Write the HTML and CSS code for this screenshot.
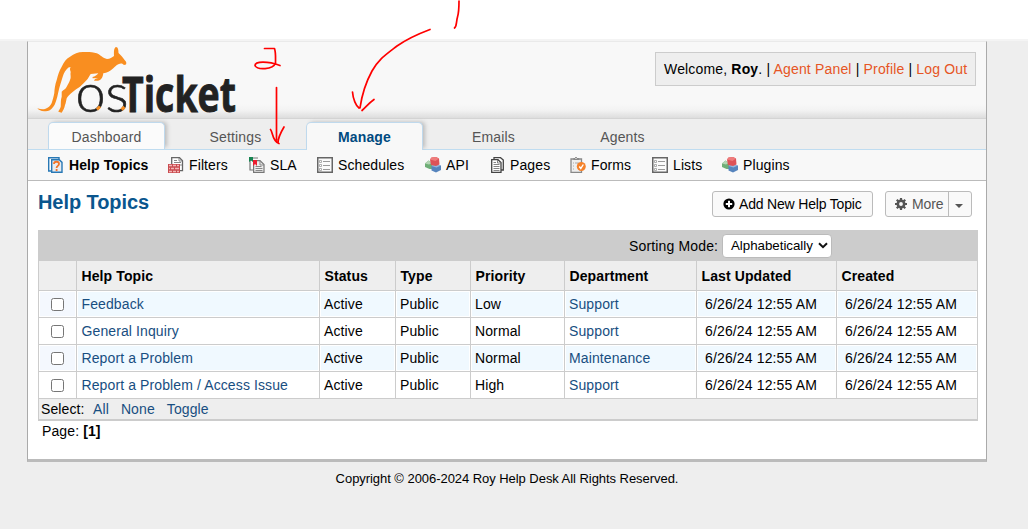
FILE: index.html
```html
<!DOCTYPE html>
<html lang="en">
<head>
<meta charset="utf-8">
<title>osTicket :: Help Topics</title>
<link rel="stylesheet" href="styles.css">
</head>
<body>
<svg class="defs" width="0" height="0">
  <defs>
    <symbol id="list" viewBox="0 0 16 16"><path d="M.75.75h14.5v14.5H.75z" fill="#fafafa" stroke="#666" stroke-width="1.5"/><path d="M6 4.5h7M6 8.5h7M6 12.5h7" stroke="#999"/><path d="M2.5 3.5h2v2h-2zM2.5 7.5h2v2h-2zM2.5 11.5h2v2h-2z" fill="#fff" stroke="#999" stroke-width=".8"/></symbol>
    <symbol id="cubes" viewBox="0 0 16 16"><path d="M0 6.500L3.500 3.500 7.500 6v6L4.500 12 0 10z" fill="#6fae77"/><path d="M0 6.500L3.500 3.500 7 6 4 7.500z" fill="#b4d6b4"/><path d="M6.500 9l4-1.500 5.500 1v4.500L11 15.500l-4.500-2z" fill="#5684bd"/><path d="M6.500 9l4-1.500 5.500 1-4.500 2z" fill="#94b6dd"/><path d="M5 2.500L6.500.5 11 0l3 1.500.5 6L11 9 6 8z" fill="#dd5257"/><path d="M5 2.500L6.500.5 11 0l3 1.500L10.500 4z" fill="#ee7c7c"/></symbol>
  </defs>
</svg>
<div class="container">
  <header class="header">
    <svg class="logo" width="206" height="72" viewBox="0 0 206 72" role="img" aria-label="osTicket">
      <path fill="#f98e20" d="M-.7 61.300C2 62 4 62.500 7 62C10 61 12.500 59 13.700 56C15 52 15.500 50 16.300 46C16.500 42 17 38 18.700 33C20 28 21 24 23.700 19.700C26 15 28 12 32 9.700C36 6.500 40 5.200 45 5C50 4.700 55 5 58.700 6.300C62 7.500 65 11.500 69 12C72 12 74 10.500 76 9C76 6 75.500 1 78 0C80 0 80.500 3 80.500 6C83 8 85 11 87 13.500C88.500 15 88.500 16 88 17.500L86 18L84 16.500C81 16.500 79 17.500 75.300 21.300C72 24.500 69 26 65.300 26.300C65 29 64 32 62 33C60 34 58 34 56 33.700L57 32L60 31L54.700 31.300L54.500 30C57 29.500 59 28 60.300 26.300L52.700 27C51 29.500 50 32 48.700 33C46 36 44 38 42 39.700C37 43 31 47 28.700 51.300C28 54 28 56 27 58C26.500 61 25 63.500 23.700 65.700L20.300 64.700C21 63 22 62 22.700 59.700C23 56 22.500 53 23.700 49.700L23.700 44.700C25 43 28 42 28.700 39.700C30 37 31 36 32 33C33.500 30 32 28 32.700 25C32 23 31.500 21.500 32.700 20.300C31 20 30 20.500 28.700 22.300C26 25 25 29 23.700 33C22 38 20.500 44 19.300 49.700C18 54 17.500 57 15.300 59.700C13 63 10.500 64.500 7 64.300C3 64.500 1 63 -.7 61.300Z"/>
      <text class="logo-os" x="37.500" y="64.500" textLength="53" lengthAdjust="spacingAndGlyphs">os</text>
      <text class="logo-ticket" x="84" y="64.500" textLength="114" lengthAdjust="spacingAndGlyphs">Ticket</text>
      <path d="M59 62.500l3-3M83.500 62.500l3-2.500" stroke="#f98e20" stroke-width="3"/>
    </svg>
    <div class="user-box">Welcome, <b>Roy</b>. | <a>Agent Panel</a> | <a>Profile</a> | <a>Log Out</a></div>
  </header>
  <nav class="tabs">
    <a class="tab raised">Dashboard</a><a class="tab">Settings</a><a class="tab raised active">Manage</a><a class="tab">Emails</a><a class="tab">Agents</a>
  </nav>
  <nav class="subnav">
    <a class="current"><svg width="16" height="16" viewBox="0 0 16 16"><path d="M11 2V.7H.7V14H3" fill="#fff" stroke="#2878b5" stroke-width="1.400"/><path d="M3.700 2.700h7.600L14 5.400v9.900H3.700z" fill="#e8edf2" stroke="#2878b5" stroke-width="1.400"/><path d="M6 7c0-3 5-3 5 0 0 2-2.400 1.800-2.400 4M8.600 12v2" fill="none" stroke="#f1762b" stroke-width="1.800"/></svg>Help Topics</a>
    <a><svg width="16" height="16" viewBox="0 0 16 16"><path d="M3.700.7h7.800l3 3v10h-10.800z" fill="#fff" stroke="#666" stroke-width="1.300"/><path d="M11 1v3h3M6 3.500h3M6 5.500h7M12 8h2" fill="none" stroke="#888"/><path d="M0 7h12v9H0z" fill="#c94c50"/><path d="M1 8.500h3M5 8.500h3M9 8.500h2M1 11.500h1M3 11.500h3M7 11.500h4M1 14.500h3M5 14.500h3M9 14.500h2" stroke="#f4b5b5" stroke-width="1.500"/></svg>Filters</a>
    <a><svg width="16" height="16" viewBox="0 0 16 16"><path d="M1 1h8M1 1v12h3" fill="none" stroke="#777" stroke-width="1.200"/><path d="M4.600 3.600h6.400l4 4v7.800H4.600z" fill="#eee" stroke="#777" stroke-width="1.200"/><path d="M11 4v4h4M6.500 9.500h6M6.500 11.500h7M6.500 13.500h7" fill="none" stroke="#888"/><path d="M0 0h4v5L2 3.500 0 5z" fill="#168451"/><path d="M4 3h4v6L6 7 4 9z" fill="#ed1c2e"/></svg>SLA</a>
    <a><svg width="16" height="16"><use href="#list"/></svg>Schedules</a>
    <a><svg width="16" height="16"><use href="#cubes"/></svg>API</a>
    <a><svg class="pages" width="16" height="16" viewBox="0 0 16 16"><path d="M4 2V.7h6.500L13.300 3v10H11" fill="#fff" stroke="#444" stroke-width="1.300"/><path d="M1.700 2.700H8L11 5.500v9.800H1.700z" fill="#fff" stroke="#444" stroke-width="1.300"/><path d="M7.500 3v3H11M3.500 5.500H6M3.500 7.500h6M3.500 9.500h6M3.500 11.500h6M3.500 13.500h6" fill="none" stroke="#777" stroke-width=".9"/></svg>Pages</a>
    <a><svg width="16" height="16" viewBox="0 0 16 16"><path d="M1 2h10.500v13.300H1z" fill="#eee" stroke="#888" stroke-width="1.300"/><path d="M3.500 2.500v-1H5L6 0l1 1.500h2v1z" fill="#ddd" stroke="#888"/><path d="M3 6h1M3 9h1M3 12h1M5 6h4" stroke="#aaa"/><circle cx="11.300" cy="9.500" r="4.500" fill="#f5822a"/><path d="M9.300 9.500l1.500 2 2.500-4" fill="none" stroke="#fff" stroke-width="1.400"/></svg>Forms</a>
    <a><svg width="16" height="16"><use href="#list"/></svg>Lists</a>
    <a><svg width="16" height="16"><use href="#cubes"/></svg>Plugins</a>
  </nav>
  <main class="content">
    <div class="title-row">
      <h2>Help Topics</h2>
      <a class="button add"><svg width="12" height="12" viewBox="0 0 12 12"><circle cx="6" cy="6" r="5.600"/><path d="M6 2.800v6.400M2.800 6h6.400" stroke="#fff" stroke-width="2"/></svg>Add New Help Topic</a>
      <a class="button more"><svg width="12" height="12" viewBox="0 0 12 12"><circle cx="6" cy="6" r="3.200" fill="none" stroke="#555" stroke-width="2.600"/><path d="M6 0v2.500M6 9.500V12M0 6h2.500M9.500 6H12M1.750 1.750l1.800 1.800M8.450 8.450l1.800 1.800M1.750 10.250l1.800-1.800M8.450 3.550l1.800-1.800" stroke="#555" stroke-width="2.200"/></svg><span>More</span><i class="drop"></i></a>
    </div>
    <div class="sorting"><label>Sorting Mode:</label><div class="select">Alphabetically<svg width="10" height="7" viewBox="0 0 10 7"><path d="M1 1.200l4 4 4-4" fill="none" stroke="#111" stroke-width="2"/></svg></div></div>
    <table class="topics">
      <colgroup><col class="c-check"><col class="c-topic"><col class="c-status"><col class="c-type"><col class="c-priority"><col class="c-dept"><col class="c-updated"><col class="c-created"></colgroup>
      <thead><tr><th></th><th>Help Topic</th><th>Status</th><th>Type</th><th>Priority</th><th>Department</th><th>Last Updated</th><th>Created</th></tr></thead>
      <tbody>
        <tr><td><input type="checkbox"></td><td><a>Feedback</a></td><td>Active</td><td>Public</td><td>Low</td><td><a>Support</a></td><td class="date">6/26/24 12:55 AM</td><td class="date">6/26/24 12:55 AM</td></tr>
        <tr><td><input type="checkbox"></td><td><a>General Inquiry</a></td><td>Active</td><td>Public</td><td>Normal</td><td><a>Support</a></td><td class="date">6/26/24 12:55 AM</td><td class="date">6/26/24 12:55 AM</td></tr>
        <tr><td><input type="checkbox"></td><td><a>Report a Problem</a></td><td>Active</td><td>Public</td><td>Normal</td><td><a>Maintenance</a></td><td class="date">6/26/24 12:55 AM</td><td class="date">6/26/24 12:55 AM</td></tr>
        <tr><td><input type="checkbox"></td><td><a>Report a Problem / Access Issue</a></td><td>Active</td><td>Public</td><td>High</td><td><a>Support</a></td><td class="date">6/26/24 12:55 AM</td><td class="date">6/26/24 12:55 AM</td></tr>
      </tbody>
    </table>
    <div class="selectors"><span>Select:</span><a>All</a><a>None</a><a>Toggle</a></div>
    <div class="paging">Page: <b>[1]</b></div>
  </main>
</div>
<footer class="footer">Copyright © 2006-2024 Roy Help Desk All Rights Reserved.</footer>
<svg class="notes" width="1028" height="150" viewBox="0 0 1028 150">
  <path d="M459 1C459 6 459 12 457.500 17C456 22 457 26 454.500 28M430 29.500C418 34 407 39 397 46C384 56 378 60 372 71C366 82 362 94 360 108M352.500 92C353 99 356 106 359 108M374 99.500C369 103 366 107 362 110.500M264.500 48.500H274.500C276 53 275.500 58 275.500 63C273 70 257 70 255 65.500C255 61 268 61 280 65.500M276.500 87.500V140M270.500 129.500C273 132 272 141 279 143.500M278 143C278 137 281 132 284 127"/>
</svg>
</body>
</html>
```
FILE: styles.css
```css
* { box-sizing: border-box; }
body {
  margin: 0;
  height: 529px;
  overflow: hidden;
  background: linear-gradient(#fff 39px, #f4f4f4 39px, #f4f4f4 41px, #eee 41px);
  padding-top: 41px;
  font: 14px/18px "Liberation Sans", Arial, sans-serif;
  letter-spacing: .11px;
  color: #000;
}
.defs { position: absolute; }
.container {
  width: 960px;
  height: 421px;
  margin-left: 27px;
  background: #fff;
  border: 1px solid #aaa;
  border-top-color: #eaeaea;
  border-bottom: 3px solid #bbb;
}
.header {
  display: flex;
  justify-content: space-between;
  align-items: flex-start;
  height: 77px;
  padding: 5px 10px 0 10px;
  background: linear-gradient(#f8f8f8 62px, #f3f3f3 68px, #ddd 76px);
  border-bottom: 1px solid #d4d4d4;
}
.logo { display: block; overflow: visible; }
.logo-os { font: 300 54px/1 Lato, sans-serif; fill: #222; stroke: #222; stroke-width: .6px; letter-spacing: 0; }
.logo-ticket { font: 700 49px/1 "Open Sans", sans-serif; fill: #222; stroke: #222; stroke-width: .9px; letter-spacing: 0; }
.user-box {
  width: 321px;
  height: 34px;
  margin-top: 5px;
  padding: 7px 8px;
  border: 1px solid #ccc;
  background: #eee;
  letter-spacing: .165px;
  white-space: nowrap;
}
.user-box a { color: #e65524; }
.tabs {
  display: flex;
  align-items: flex-end;
  gap: 12px;
  height: 31px;
  padding-left: 20px;
  background: #eee;
  border-bottom: 1px solid #bfdcf0;
}
.tab {
  width: 117px;
  height: 27px;
  padding-top: 6px;
  text-align: center;
  color: #555;
  letter-spacing: .15px;
}
.raised {
  background: #fbfbfb;
  border: 1px solid #bfd9ed;
  border-bottom: 0;
  border-radius: 5px 5px 0 0;
  padding-top: 5px;
  box-shadow: 3px -1px 4px -1px #bbb;
  clip-path: inset(-6px -8px 0 -6px);
}
.active { height: 28px; margin-bottom: -1px; background: #f8f8f8; color: #004a80; font-weight: bold; }
.subnav {
  display: grid;
  grid-template-columns: 120px 81px 68px 108px 65px 80px 82px 70px auto;
  align-items: center;
  height: 31px;
  padding-left: 20px;
  background: #f8f8f8;
  border-bottom: 1px solid #bbb;
}
.subnav a { display: flex; align-items: center; gap: 5px; }
.subnav .pages { margin-right: -1px; }
.current { font-weight: bold; letter-spacing: .1px; }
.content { padding: 10px 8px 0 10px; }
.title-row { display: flex; height: 39px; align-items: flex-start; }
h2 { margin: 0 auto 0 0; font-size: 20px; line-height: 23px; color: #0a568e; letter-spacing: -.08px; }
.button {
  display: flex;
  align-items: center;
  height: 26px;
  border: 1px solid #bbb;
  border-radius: 3px;
  background: #f9f9f9;
}
.add { width: 161px; gap: 4px; padding-left: 10px; padding-bottom: 1px; letter-spacing: -.18px; white-space: nowrap; }
.more { width: 87px; margin: 0 6px 0 12px; padding-left: 9px; color: #555; }
.more span { width: 41px; padding-left: 5px; letter-spacing: -.1px; }
.drop { align-self: stretch; flex: 1; display: flex; align-items: center; justify-content: center; border-left: 1px solid #bbb; }
.drop::after { content: ""; margin: 3px 3px 0 0; border: 4px solid transparent; border-top-color: #555; border-bottom: 0; }
.sorting { display: flex; width: 940px; height: 31px; padding: 4px 0 0 591px; background: #ccc; }
.sorting label { width: 93px; padding-top: 3px; letter-spacing: .15px; }
.select {
  display: flex;
  justify-content: space-between;
  align-items: center;
  width: 110px;
  height: 24px;
  padding: 0 3px 1px 8px;
  border: 1px solid #bbb;
  border-radius: 4px;
  background: #fff;
  font-size: 13.333px;
  letter-spacing: -.03px;
}
.topics { width: 940px; table-layout: fixed; border-collapse: separate; border-spacing: 0; border-left: 1px solid #ccc; }
.c-check { width: 38px; }
.c-topic { width: 243px; }
.c-status { width: 76px; }
.c-type { width: 75px; }
.c-priority { width: 94px; }
.c-dept { width: 132px; }
.c-updated { width: 140px; }
.c-created { width: 141px; }
th { height: 30px; padding: 1px 4px 0 4.500px; text-align: left; background: #eee; border: solid #ccc; border-width: 0 1px 1px 0; }
td { height: 27px; padding: 0 4px; border: solid #ccc; border-width: 0 1px 1px 0; box-shadow: inset 0 0 0 1px #fff; }
td:nth-child(2) { padding-left: 4.500px; }
tbody tr:nth-child(odd) { background: #f0f9ff; }
tbody tr:nth-child(odd) td:first-child { background: #f4f8fe; }
td.date { padding-left: 8px; letter-spacing: .14px; }
td input { display: block; width: 13px; height: 13px; margin: 1px 0 0 7.500px; }
td a, .selectors a { color: #184e81; }
.selectors { display: flex; width: 940px; height: 22px; padding: 1px 2px; border: solid #ccc; border-width: 0 1px 2px; background: #eee; }
.selectors span { width: 52px; }
.selectors a { margin-right: 12px; }
.paging { padding: 1px 4px; }
.footer { padding: 8px 41px 0 27px; text-align: center; font-size: 13px; letter-spacing: -.05px; width: 1028px; }
.notes { position: absolute; left: 0; top: 0; fill: none; stroke: #f00; stroke-width: 1.700px; stroke-linecap: round; stroke-linejoin: round; pointer-events: none; }
```
